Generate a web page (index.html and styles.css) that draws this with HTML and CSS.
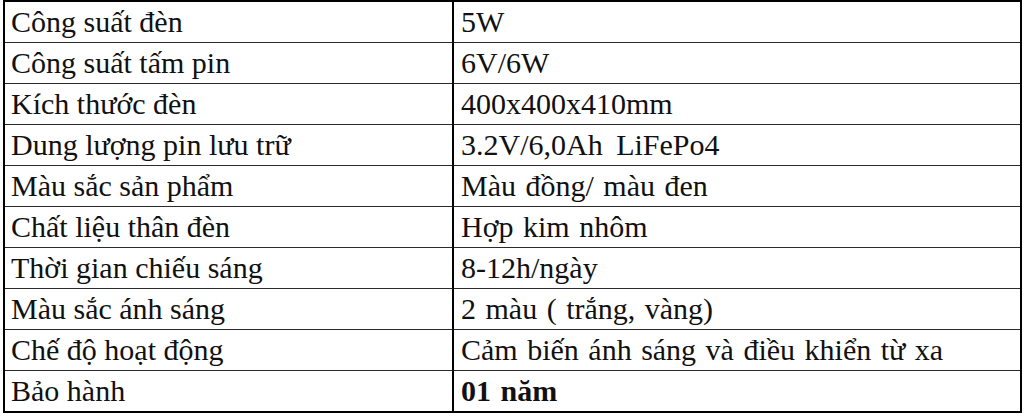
FILE: index.html
```html
<!DOCTYPE html>
<html lang="vi">
<head>
<meta charset="utf-8">
<link rel="stylesheet" href="styles.css">
</head>
<body>
<table class="spec">
  <colgroup><col class="c1"><col class="c2"></colgroup>
  <tbody>
    <tr><td>Công suất đèn</td><td>5W</td></tr>
    <tr><td>Công suất tấm pin</td><td>6V/6W</td></tr>
    <tr><td>Kích thước đèn</td><td>400x400x410mm</td></tr>
    <tr><td>Dung lượng pin lưu trữ</td><td class="wide">3.2V/6,0Ah LiFePo4</td></tr>
    <tr><td>Màu sắc sản phẩm</td><td>Màu đồng/ màu đen</td></tr>
    <tr><td>Chất liệu thân đèn</td><td>Hợp kim nhôm</td></tr>
    <tr><td>Thời gian chiếu sáng</td><td>8-12h/ngày</td></tr>
    <tr><td>Màu sắc ánh sáng</td><td>2 màu ( trắng, vàng)</td></tr>
    <tr><td>Chế độ hoạt động</td><td>Cảm biến ánh sáng và điều khiển từ xa</td></tr>
    <tr><td>Bảo hành</td><td class="bold">01 năm</td></tr>
  </tbody>
</table>
</body>
</html>
```

FILE: styles.css
```css
html, body {
  margin: 0;
  padding: 0;
  background: #fff;
}
.spec {
  margin-left: 3px;
  width: 1019px;
  table-layout: fixed;
  border-collapse: separate;
  border-spacing: 0;
  border: 2px solid #000;
  font-family: "Liberation Serif", "Times New Roman", serif;
  font-size: 30px;
  color: #111;
}
.c1 { width: 449px; }
.spec td {
  height: 40px;
  line-height: 40px;
  padding: 0 0 0 7px;
  border-bottom: 1px solid #2a2a2a;
  white-space: nowrap;
  overflow: hidden;
  vertical-align: middle;
  box-sizing: content-box;
  word-spacing: 2px;
}
.spec td:first-child {
  border-right: 2px solid #000;
  padding-left: 6px;
  word-spacing: 0;
}
.spec td.wide {
  word-spacing: 6px;
}
.spec tr:last-child td {
  border-bottom: none;
}
.bold { font-weight: bold; }
```
